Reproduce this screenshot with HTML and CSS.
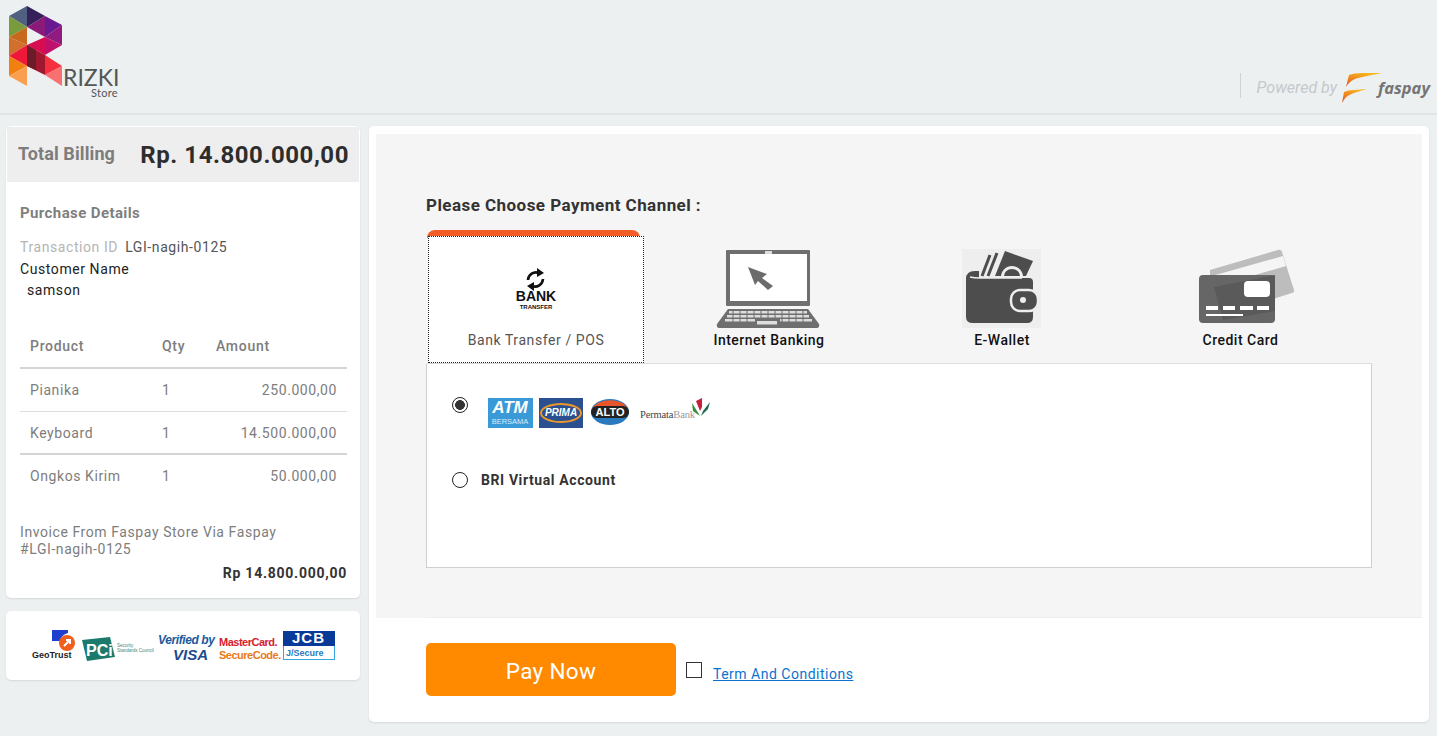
FILE: index.html
```html
<!DOCTYPE html>
<html lang="en">
<head>
<meta charset="utf-8">
<title>Faspay Payment</title>
<link rel="stylesheet" href="styles.css">
</head>
<body>
<header class="topbar">
  <svg class="logo" width="125" height="105" viewBox="0 0 125 105">
    <polygon points="9,16 27,6 27,27" fill="#4f6080"/>
    <polygon points="27,6 45,16 27,27" fill="#35205a"/>
    <polygon points="45,16 27,27 45,37" fill="#8a1a78"/>
    <polygon points="45,16 62,25 45,37" fill="#6a1a90"/>
    <polygon points="62,25 62,45 45,37" fill="#901a80"/>
    <polygon points="9,16 27,27 9,37" fill="#7a9a3e"/>
    <polygon points="9,37 27,27 27,45" fill="#c8681c"/>
    <polygon points="9,37 27,45 9,56" fill="#d0702c"/>
    <polygon points="45,37 62,45 45,55" fill="#c0106e"/>
    <polygon points="27,45 45,37 45,55" fill="#d80c50"/>
    <polygon points="9,56 27,45 27,66" fill="#f01838"/>
    <polygon points="27,45 45,55 45,75 27,66" fill="#a01830"/>
    <polygon points="27,45 36,50 36,70 27,66" fill="#6c1c28"/>
    <polygon points="45,55 62,66 45,75" fill="#f43040"/>
    <polygon points="45,75 62,66 62,86" fill="#f87070"/>
    <polygon points="9,56 27,66 9,76" fill="#f28010"/>
    <polygon points="9,76 27,66 27,86" fill="#f8a050"/>
    <text class="logo-name" x="63" y="86">RIZKI</text>
    <text class="logo-sub" x="91" y="97">Store</text>
  </svg>
  <div class="powered">
    <span class="powered-by">Powered by</span>
    <svg class="faspay-mark" width="42" height="31" viewBox="0 0 42 31">
      <defs>
        <linearGradient id="wing" x1="0" y1="1" x2="0.6" y2="0">
          <stop offset="0" stop-color="#e0501c"/>
          <stop offset="0.55" stop-color="#f08a1c"/>
          <stop offset="1" stop-color="#f7b81e"/>
        </linearGradient>
      </defs>
      <path d="M4 14 L7 2 Q12 0 20 0 L40 0 Q24 3 16 5 Q8 7 4 14Z" fill="url(#wing)"/>
      <path d="M0 30 L2 19 Q6 17 12 17 L25 16 Q18 18 12 20 Q4 22 0 30Z" fill="url(#wing)"/>
    </svg>
    <span class="faspay-word">faspay</span>
  </div>
</header>

<main class="layout">
  <aside class="side">
    <section class="card summary">
      <div class="total">
        <span class="total-label">Total Billing</span>
        <span class="total-value">Rp. 14.800.000,00</span>
      </div>
      <div class="details">
        <h2 class="details-title">Purchase Details</h2>
        <p class="line"><span class="muted">Transaction ID</span> <span class="val">LGI-nagih-0125</span></p>
        <p class="line dark">Customer Name</p>
        <p class="line dark indent">samson</p>
        <table class="items">
          <thead>
            <tr><th class="c-name">Product</th><th class="c-qty">Qty</th><th class="c-amt">Amount</th></tr>
          </thead>
          <tbody>
            <tr><td>Pianika</td><td>1</td><td class="num">250.000,00</td></tr>
            <tr><td>Keyboard</td><td>1</td><td class="num">14.500.000,00</td></tr>
            <tr class="last"><td>Ongkos Kirim</td><td>1</td><td class="num">50.000,00</td></tr>
          </tbody>
        </table>
        <p class="invoice">Invoice From Faspay Store Via Faspay<br>#LGI-nagih-0125</p>
        <p class="invoice-total">Rp 14.800.000,00</p>
      </div>
    </section>
    <section class="card trust">
      <svg width="306" height="36" viewBox="0 0 306 36">
        <path d="M20 0 H36 V3 Q29 5 28 11 L20 11Z" fill="#1c3fd0"/>
        <circle cx="35" cy="13" r="8" fill="#f0601c"/>
        <path d="M32 16 L38 10 M34 10 H38 V14" stroke="#fff" stroke-width="2" fill="none"/>
        <text class="t-geo" x="0" y="28">GeoTrust</text>
        <polygon points="50,10 78,7 83,27 55,31" fill="#1c7a6c"/>
        <text class="t-pci" x="54" y="26">PCi</text>
        <text class="t-small" x="85" y="17">Security</text>
        <text class="t-small" x="85" y="22">Standards Council</text>
        <text class="t-ver" x="126" y="14">Verified by</text>
        <text class="t-visa" x="141" y="30">VISA</text>
        <text class="t-mc" x="187" y="16">MasterCard.</text>
        <text class="t-sc" x="187" y="29">SecureCode.</text>
        <rect x="251.5" y="1.5" width="51" height="28" fill="#fff" stroke="#35a8e0"/>
        <rect x="251" y="1" width="52" height="15" fill="#0a3a98"/>
        <text class="t-jcb" x="260" y="13">JCB</text>
        <text class="t-jsec" x="254" y="26">J/Secure</text>
      </svg>
    </section>
  </aside>

  <section class="card pay">
    <div class="panel">
      <h1 class="choose">Please Choose Payment Channel :</h1>
      <div class="tabs">
        <div class="tab tab-active">
          <div class="tab-cap"></div>
          <div class="tab-body">
            <svg class="ic-bank" width="42" height="44" viewBox="0 0 42 44">
              <path d="M13 14 A8 8 0 0 1 24 7" fill="none" stroke="#111" stroke-width="2.6"/>
              <polygon points="22,2 29,7 22,11" fill="#111"/>
              <path d="M28 13 A8 8 0 0 1 17 20" fill="none" stroke="#111" stroke-width="2.6"/>
              <polygon points="19,16 12,20 19,25" fill="#111"/>
              <text class="bank-big" x="21" y="35">BANK</text>
              <text class="bank-small" x="21" y="43">TRANSFER</text>
            </svg>
            <span class="tab-label-active">Bank Transfer / POS</span>
          </div>
        </div>
        <div class="tab tab-net">
          <svg width="104" height="78" viewBox="0 0 104 78">
            <rect x="10" y="0" width="84" height="56" fill="#6f6f6f" rx="1"/>
            <rect x="14" y="4" width="77" height="47" fill="#fff"/>
            <rect x="49" y="1" width="7" height="3" fill="#ddd"/>
            <path d="M32 17 L51 24 L46 28 L57 36 L52 40 L42 31 L39 35Z" fill="#6b6b6b"/>
            <path d="M12 59 H92 L103 74 Q104 78 100 78 H4 Q0 78 1 74Z" fill="#6f6f6f"/>
            <g fill="#ddd">
              <rect x="13" y="61" width="78" height="2.5"/>
              <rect x="11" y="65" width="82" height="2.5"/>
              <rect x="9" y="69" width="30" height="2.5"/>
              <rect x="41" y="71" width="20" height="3.5"/>
              <rect x="64" y="69" width="32" height="2.5"/>
            </g>
            <path d="M17 60 V72 M24 60 V72 M31 60 V72 M38 60 V68 M45 60 V68 M52 60 V68 M59 60 V68 M66 60 V72 M73 60 V72 M80 60 V72 M87 60 V72" stroke="#6f6f6f" stroke-width="1"/>
          </svg>
          <span class="tab-label">Internet Banking</span>
        </div>
        <div class="tab tab-wallet">
          <svg width="79" height="79" viewBox="0 0 79 79">
            <rect width="79" height="79" fill="#eeeeee"/>
            <g fill="none" stroke="#4d4d4d" stroke-width="3">
              <path d="M20 27 L28 6"/>
              <path d="M26 27 L35 4"/>
            </g>
            <path d="M33 27 L43 2 L71 12 L64 27Z" fill="#4d4d4d"/>
            <circle cx="50" cy="28" r="11" fill="#eeeeee"/>
            <path d="M42 27 A8 7 0 0 1 58 27 Z" fill="#4d4d4d"/>
            <path d="M4 30 Q4 22 13 22 L17 22 L17 29 L67 29 Q71 29 71 33 L71 68 Q71 74 65 74 L11 74 Q4 74 4 68Z" fill="#4d4d4d"/>
            <path d="M8 28 Q12 29 18 29 H60" stroke="#eee" stroke-width="1.5" fill="none"/>
            <rect x="49" y="41" width="27" height="21" rx="9" fill="#4d4d4d" stroke="#eee" stroke-width="2.5"/>
            <circle cx="61" cy="51" r="3" fill="#eee"/>
          </svg>
          <span class="tab-label">E-Wallet</span>
        </div>
        <div class="tab tab-card">
          <svg width="96" height="78" viewBox="0 0 96 78">
            <path d="M11 21 L79 1 Q82 0 83 3 L95 41 Q96 43 93 44 L74 50 L11 30Z" fill="#bdbdbd"/>
            <path d="M13 27 L84 7 L87 17 L15 38Z" fill="#f5f5f5"/>
            <rect x="0" y="26" width="76" height="48" rx="4" fill="#666"/>
            <path d="M15 38 L76 26 V62 L24 71Z" fill="#5a5a5a"/>
            <rect x="45" y="32" width="26" height="16" rx="4" fill="#fff"/>
            <g fill="#fff">
              <rect x="7" y="57" width="12" height="4"/>
              <rect x="24" y="57" width="12" height="4"/>
              <rect x="41" y="57" width="13" height="4"/>
              <rect x="58" y="57" width="12" height="4"/>
              <rect x="7" y="65" width="37" height="2"/>
            </g>
          </svg>
          <span class="tab-label">Credit Card</span>
        </div>
      </div>
      <div class="options">
        <div class="opt opt-logos">
          <span class="radio radio-on"></span>
          <svg class="banks" width="224" height="32" viewBox="0 0 224 32">
            <rect x="0" y="1" width="45" height="30" fill="#3a9ad8"/>
            <text class="b-atm" x="22" y="16">ATM</text>
            <text class="b-ber" x="22" y="27">BERSAMA</text>
            <rect x="51" y="1" width="44" height="30" fill="#2a5090"/>
            <ellipse cx="73" cy="16" rx="20" ry="9" fill="none" stroke="#e8962e" stroke-width="2"/>
            <text class="b-prima" x="73" y="19">PRIMA</text>
            <ellipse cx="122" cy="15" rx="19" ry="13" fill="#2a7ac0"/>
            <path d="M104 12 A19 13 0 0 1 140 12Z" fill="#e8562a"/>
            <rect x="103" y="9" width="38" height="12" rx="6" fill="#222"/>
            <text class="b-alto" x="122" y="19">ALTO</text>
            <text class="b-perm" x="152" y="21">Permata<tspan class="b-bank">Bank</tspan></text>
            <path d="M208 4 L214 1 L214 10 L212 14Z" fill="#c8203c"/>
            <path d="M204 6 L209 14 L212 19 L205 14Z" fill="#3a8a40"/>
            <path d="M215 14 L222 5 L220 12 L213 19Z" fill="#1c6a50"/>
          </svg>
        </div>
        <div class="opt opt-bri">
          <span class="radio"></span>
          <span class="opt-text">BRI Virtual Account</span>
        </div>
      </div>
    </div>
    <div class="actions">
      <button class="pay-btn" type="button">Pay Now</button>
      <span class="check"></span>
      <a class="terms" href="#">Term And Conditions</a>
    </div>
  </section>
</main>
</body>
</html>
```

FILE: styles.css
```css
* { box-sizing: border-box; }
html, body { margin: 0; padding: 0; }
body {
  width: 1437px;
  height: 736px;
  overflow: hidden;
  background: #ecf0f1;
  font-family: Roboto, "Liberation Sans", sans-serif;
  font-size: 14px;
  letter-spacing: .58px;
  color: #333;
}
p, h1, h2 { margin: 0; }

.topbar {
  height: 115px;
  border-bottom: 2px solid #e2e4e5;
  display: flex;
  justify-content: space-between;
  align-items: flex-start;
}
.logo { display: block; }
.logo-name { font: 400 23px/1 Lato, sans-serif; letter-spacing: 0; fill: #555; }
.logo-sub { font: 400 11px/1 Lato, sans-serif; letter-spacing: .3px; fill: #555; }
.powered {
  display: flex;
  align-items: flex-start;
  margin-top: 73px;
  padding-right: 7px;
}
.powered-by {
  border-left: 1px solid #cfd2d3;
  height: 25px;
  line-height: 30px;
  padding-left: 16px;
  font-style: italic;
  font-size: 16px;
  letter-spacing: 0;
  color: #c6c8ca;
}
.faspay-mark { display: block; margin-left: 5px; }
.faspay-word {
  margin: 2px 0 0 -6px;
  font: italic 700 16.5px/26px "Open Sans", sans-serif;
  letter-spacing: 0;
  color: #757575;
}

.layout {
  display: flex;
  gap: 9px;
  padding: 11px 8px 0 6px;
  align-items: flex-start;
}
.side { width: 354px; display: flex; flex-direction: column; gap: 13px; }
.card {
  background: #fff;
  border-radius: 5px;
  box-shadow: 0 1px 2px rgba(0,0,0,.1);
}
.summary { height: 472px; overflow: hidden; padding-top: 1px; }
.total {
  height: 55px;
  margin: 0 1px;
  background: #eeeeee;
  display: flex;
  align-items: center;
  justify-content: space-between;
  padding: 0 10px 0 11px;
}
.total-label { font-size: 18px; font-weight: 700; color: #7d7d7d; letter-spacing: .1px; margin-top: -2px; }
.total-value { font-size: 24px; font-weight: 700; color: #2d2d2d; letter-spacing: .55px; }
.details { padding: 23px 13px 0 14px; }
.details-title { font-size: 15px; font-weight: 700; color: #7f7f7f; line-height: 17px; margin-bottom: 15px; letter-spacing: .4px; }
.line { line-height: 21.5px; }
.muted { color: #b5b5b5; }
.val { color: #555; margin-left: 3px; }
.dark { color: #222; }
.indent { padding-left: 7px; }
.items { width: 327px; border-collapse: collapse; margin-top: 21px; color: #7d7d7d; table-layout: fixed; }
.items th { font-weight: 500; text-align: left; height: 45px; padding: 2px 10px 0; border-bottom: 2px solid #d5d5d5; letter-spacing: .7px; }
.items td { height: 43px; padding: 1px 10px 0; border-bottom: 1px solid #dedede; }
.items tbody tr:nth-child(1) td { height: 44px; }
.items tbody tr:nth-child(2) td { height: 42px; padding-top: 2px; border-bottom-width: 2px; border-bottom-color: #d5d5d5; }
.items .last td { border-bottom: 0; }
.c-name { width: 132px; }
.c-qty { width: 54px; }
.items .num { text-align: right; }
.invoice { margin-top: 27px; line-height: 17.5px; color: #7d7d7d; }
.invoice-total { margin-top: 5px; text-align: right; font-weight: 700; color: #333; letter-spacing: .75px; line-height: 18px; }
.trust { height: 69px; padding: 19px 0 0 26px; }
.trust svg { display: block; }
.t-geo { font: 700 9px "Liberation Sans", sans-serif; fill: #222; letter-spacing: 0; }
.t-pci { font: 700 16px "Liberation Sans", sans-serif; fill: #fff; letter-spacing: 0; }
.t-small { font: 400 4.5px "Liberation Sans", sans-serif; fill: #3a8a80; letter-spacing: 0; }
.t-ver { font: italic 700 12px "Liberation Sans", sans-serif; fill: #1c5a9c; letter-spacing: -.4px; }
.t-visa { font: italic 700 15px "Liberation Sans", sans-serif; fill: #1c4a8c; letter-spacing: 0; }
.t-mc { font: 700 11px "Liberation Sans", sans-serif; fill: #d8202c; letter-spacing: -.5px; }
.t-sc { font: 700 11px "Liberation Sans", sans-serif; fill: #e87a1c; letter-spacing: -.5px; }
.t-jcb { font: 700 15px "Liberation Sans", sans-serif; fill: #fff; letter-spacing: 1px; }
.t-jsec { font: 700 9px "Liberation Sans", sans-serif; fill: #2a78c0; letter-spacing: 0; }

.pay { width: 1060px; height: 596px; padding: 8px 7px 0; }
.panel { height: 484px; background: #f5f5f5; padding: 61px 50px 0; }
.choose { font-size: 17px; font-weight: 700; color: #333; line-height: 20px; margin-bottom: 15px; letter-spacing: .45px; }
.tabs { display: flex; height: 134px; margin-left: 1px; border-bottom: 1px solid #dcdcdc; width: 945px; }
.tab { display: flex; flex-direction: column; align-items: center; }
.tab-active { width: 218px; }
.tab-cap { width: 213px; align-self: flex-start; height: 8px; background: #f25c27; border-radius: 10px 10px 0 0; margin-bottom: -2px; }
.tab-body {
  width: 216px;
  height: 127px;
  margin: 0 auto 0 1px;
  background: #fff;
  border: 1px dotted #222;
  display: flex;
  flex-direction: column;
  align-items: center;
  padding-top: 29px;
}
.ic-bank { display: block; }
.bank-big { font: 700 14px/1 "Liberation Sans", sans-serif; text-anchor: middle; letter-spacing: 0; fill: #111; }
.bank-small { font: 700 6px/1 "Liberation Sans", sans-serif; text-anchor: middle; letter-spacing: 0; fill: #111; }
.tab-label-active { margin-top: 21px; color: #555; line-height: 18px; }
.tab-net { width: 248px; padding-top: 20px; }
.tab-wallet { width: 218px; padding-top: 19px; }
.tab-card { width: 259px; padding-top: 19px; }
.tab svg { display: block; }
.tab-label { color: #111; font-weight: 500; letter-spacing: .5px; line-height: 18px; margin-top: 3px; }
.tab-net svg { margin-right: 2px; }
.tab-wallet svg { margin-right: 2px; }
.tab-card .tab-label { margin-top: 4px; }
.tab-card svg { margin-left: 12px; }
.options { width: 946px; height: 204px; background: #fff; border: 1px solid #cfcfcf; border-top: 0; }
.opt { display: flex; padding-left: 25px; }
.opt-logos { align-items: flex-start; padding-top: 33px; height: 99px; }
.banks { margin: 0 0 0 20px; display: block; }
.radio {
  width: 16px; height: 16px;
  border: 1px solid #222;
  border-radius: 50%;
  background: #fff;
  flex: none;
}
.radio-on { background: radial-gradient(circle, #333 0 4.6px, #fff 5.2px); }
.opt-bri { align-items: center; height: 34px; }
.opt-text { margin-left: 13px; font-weight: 700; color: #333; letter-spacing: .6px; }
.b-atm { font: italic 700 17px "Liberation Sans", sans-serif; fill: #fff; text-anchor: middle; letter-spacing: 0; }
.b-ber { font: 400 7.5px "Liberation Sans", sans-serif; fill: #d8ecf8; text-anchor: middle; letter-spacing: 0; }
.b-prima { font: italic 700 10px "Liberation Sans", sans-serif; fill: #fff; text-anchor: middle; letter-spacing: 0; }
.b-alto { font: 700 11px "Liberation Sans", sans-serif; fill: #fff; text-anchor: middle; letter-spacing: 0; }
.b-perm { font: 400 10.5px "Liberation Serif", serif; fill: #444; letter-spacing: -.15px; }
.b-bank { fill: #999; }

.actions { display: flex; align-items: flex-start; margin-left: 50px; padding-top: 25px; border-top: 1px solid #eeeeee; margin-top: -1px; }
.pay-btn {
  width: 250px; height: 53px;
  background: #ff8a00;
  color: #fff;
  border: 0;
  border-radius: 5px;
  font: 400 22.5px Roboto, sans-serif;
  letter-spacing: .3px;
  padding: 3px 0 0;
}
.check { width: 16px; height: 16px; border: 1px solid #333; margin: 19px 0 0 10px; background: #fff; }
.terms { margin: 22px 0 0 11px; color: #0b72d0; line-height: 18px; letter-spacing: .5px; }
```
